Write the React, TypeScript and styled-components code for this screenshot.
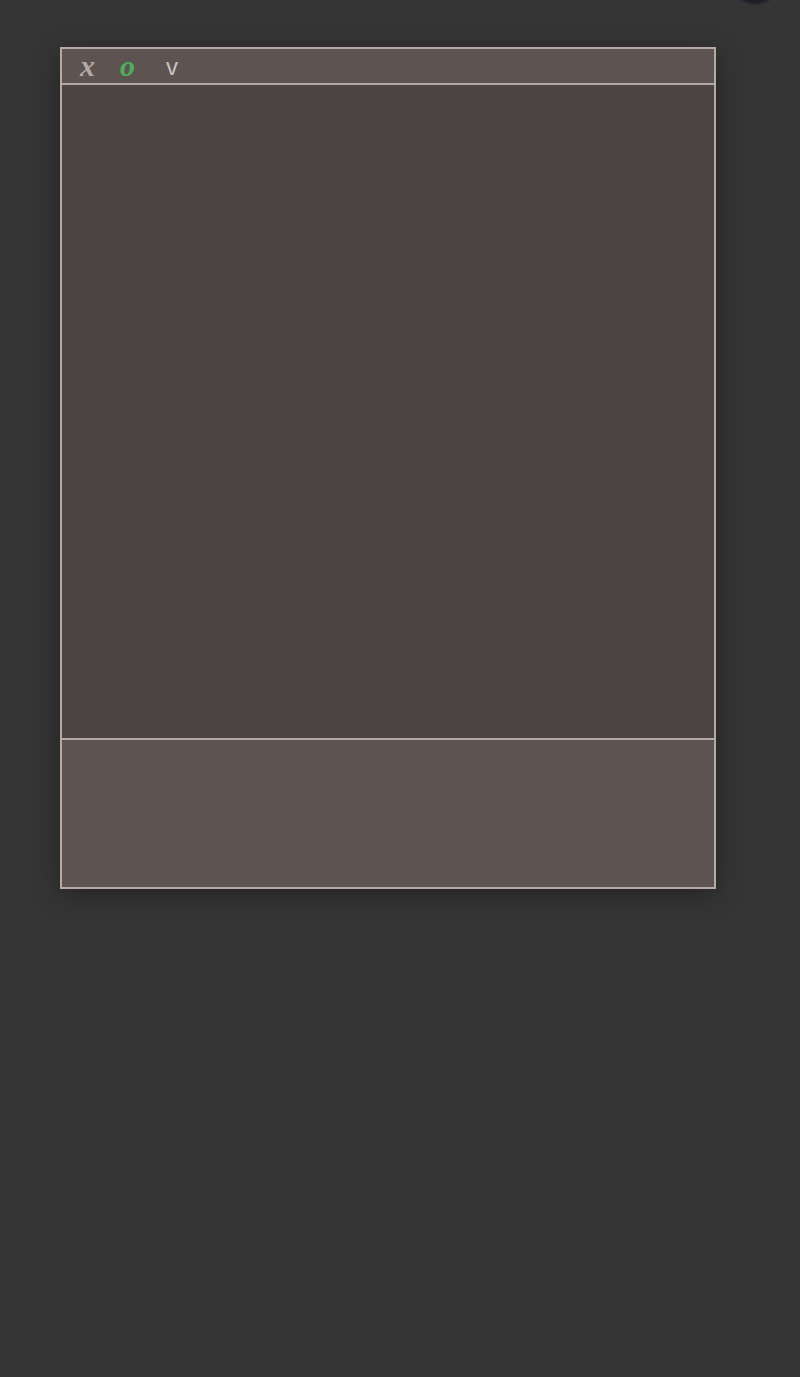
import React from "react";
import styled, { createGlobalStyle } from "styled-components";

const Global = createGlobalStyle`
  html, body { margin: 0; padding: 0; background: #353535; }
  body { width: 800px; height: 1377px; overflow: hidden; font-family: "Liberation Sans", Arial, sans-serif; }
`;

const Page = styled.div`
  position: relative;
  width: 800px;
  height: 1377px;
  background: #353535;
  padding: 47px 0 0 60px;
  box-sizing: border-box;
`;

const Orb = styled.div`
  position: absolute;
  left: 733px;
  top: -34px;
  width: 44px;
  height: 38px;
  border-radius: 50%;
  background: #1f1e28;
  filter: blur(1px);
`;

const Panel = styled.div`
  width: 656px;
  display: flex;
  flex-direction: column;
  border: 2px solid #b6a9a4;
  box-sizing: border-box;
  box-shadow: 0 6px 24px rgba(0, 0, 0, 0.35);
`;

const Toolbar = styled.div`
  height: 34px;
  background: #5d5452;
  border-bottom: 2px solid #b6a9a4;
  display: flex;
  align-items: center;
  padding-left: 18px;
`;

const Tool = styled.span<{ $color: string; $serif?: boolean; $w: number }>`
  display: inline-block;
  width: ${(p) => p.$w}px;
  color: ${(p) => p.$color};
  font-family: ${(p) => (p.$serif ? '"Liberation Serif", "Times New Roman", serif' : '"Liberation Sans", Arial, sans-serif')};
  font-style: ${(p) => (p.$serif ? "italic" : "normal")};
  font-size: ${(p) => (p.$serif ? 30 : 24)}px;
  font-weight: ${(p) => (p.$serif ? 700 : 400)};
  line-height: 1;
  margin-top: ${(p) => (p.$serif ? 0 : 2)}px;
`;

const Canvas = styled.div`
  height: 653px;
  background: #4a4542;
  border-bottom: 2px solid #b6a9a4;
`;

const Footer = styled.div`
  height: 147px;
  background: #5d5452;
`;

export default function App() {
  return (
    <>
      <Global />
      <Page>
        <Orb />
        <Panel>
          <Toolbar>
            <Tool $color="#b3a8a4" $serif $w={40}>x</Tool>
            <Tool $color="#4caf5a" $serif $w={46}>o</Tool>
            <Tool $color="#c9c1bd" $w={20}>v</Tool>
          </Toolbar>
          <Canvas />
          <Footer />
        </Panel>
      </Page>
    </>
  );
}
